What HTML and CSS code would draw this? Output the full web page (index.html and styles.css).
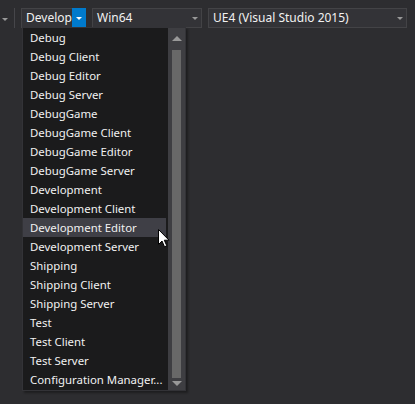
FILE: index.html
```html
<!DOCTYPE html>
<html lang="en">
<head>
    <meta charset="UTF-8">
    <title>Solution Configurations</title>
    <link rel="stylesheet" href="styles.css">
</head>
<body>
    <div class="toolbar">
        <div class="overflow"><span class="arrow gray"></span></div>
        <div class="separator"></div>
        <div class="combo config">
            <div class="combo-text">Development</div>
            <div class="combo-btn active"><span class="arrow white"></span></div>
        </div>
        <div class="combo platform">
            <div class="combo-text">Win64</div>
            <div class="combo-btn"><span class="arrow gray"></span></div>
        </div>
        <div class="combo project">
            <div class="combo-text">UE4 (Visual Studio 2015)</div>
            <div class="combo-btn"><span class="arrow gray"></span></div>
        </div>
    </div>

    <div class="dropdown">
        <ul class="items">
            <li>Debug</li>
            <li>Debug Client</li>
            <li>Debug Editor</li>
            <li>Debug Server</li>
            <li>DebugGame</li>
            <li>DebugGame Client</li>
            <li>DebugGame Editor</li>
            <li>DebugGame Server</li>
            <li>Development</li>
            <li>Development Client</li>
            <li class="hover">Development Editor</li>
            <li>Development Server</li>
            <li>Shipping</li>
            <li>Shipping Client</li>
            <li>Shipping Server</li>
            <li>Test</li>
            <li>Test Client</li>
            <li>Test Server</li>
            <li>Configuration Manager...</li>
        </ul>
        <div class="scrollbar">
            <div class="scroll-arrow"><span class="arrow up"></span></div>
            <div class="track"><div class="thumb"></div></div>
            <div class="scroll-arrow"><span class="arrow down"></span></div>
        </div>
    </div>

    <!-- mouse pointer -->
    <svg class="cursor" width="12" height="19" viewBox="0 0 12 19">
        <path d="M0.5 0.5 L0.5 15.5 L4 12 L6.5 17.8 L8.8 16.8 L6.3 11.2 L11 11.2 Z" fill="#fff" stroke="#000" stroke-width="1"/>
    </svg>
</body>
</html>
```

FILE: styles.css
```css
body {
    margin: 0;
    background-color: #2d2d30;
    font-family: "Noto Sans", "Open Sans", sans-serif;
    font-size: 11.4px;
    color: #f1f1f1;
    height: 404px;
    overflow: hidden;
}
.toolbar {
    display: flex;
    align-items: center;
    padding-top: 8px;
    height: 20px;
}
.overflow {
    width: 8px;
    margin-left: 1px;
    display: flex;
    justify-content: center;
    padding-top: 2px;
}
.separator {
    width: 1px;
    height: 20px;
    margin-left: 5px;
    background-color: #46464a;
}
.arrow {
    display: block;
    width: 0;
    height: 0;
    border-left: 3px solid transparent;
    border-right: 3px solid transparent;
    border-top: 3px solid #999999;
}
.arrow.white {
    border-top-color: #ffffff;
}
.combo {
    box-sizing: border-box;
    height: 20px;
    margin-left: 6px;
    display: flex;
    background-color: #333337;
    border: 1px solid #434346;
}
.config { width: 65px; }
.platform { width: 110px; }
.project { width: 199px; }
.combo-text {
    flex: 1;
    min-width: 0;
    overflow: hidden;
    white-space: nowrap;
    padding-left: 4px;
    line-height: 17px;
    font-size: 12px;
}
.combo-btn {
    width: 13px;
    flex-shrink: 0;
    display: flex;
    align-items: center;
    justify-content: center;
    padding-top: 1px;
}
.combo-btn.active {
    background-color: #007acc;
    margin: -1px -1px -1px 0;
    width: 14px;
}
.dropdown {
    position: absolute;
    left: 22px;
    top: 27px;
    width: 164px;
    height: 364px;
    box-sizing: border-box;
    display: flex;
    background-color: #1b1b1c;
    border: 1px solid #333337;
    box-shadow: 2px 2px 2px rgba(0, 0, 0, 0.35);
}
.items {
    list-style: none;
    margin: 0;
    padding: 0;
    width: 144px;
}
.items li {
    height: 19px;
    line-height: 19px;
    padding-left: 7px;
    white-space: nowrap;
}
.items li.hover {
    background-color: #3f3f46;
}
.scrollbar {
    margin-left: 2px;
    width: 17px;
    display: flex;
    flex-direction: column;
    background-color: #3e3e42;
}
.scroll-arrow {
    height: 17px;
    display: flex;
    align-items: center;
    justify-content: center;
}
.arrow.up {
    border-left-width: 5px;
    border-right-width: 5px;
    border-top: none;
    border-bottom: 5px solid #999999;
    margin-top: 4px;
}
.arrow.down {
    border-left-width: 5px;
    border-right-width: 5px;
    border-top: 5px solid #999999;
    margin-top: 4px;
}
.track {
    flex: 1;
    display: flex;
    justify-content: center;
}
.thumb {
    width: 9px;
    height: 100%;
    background-color: #686868;
    margin-top: 5px;
    margin-bottom: 3px;
}
.cursor {
    position: absolute;
    left: 158px;
    top: 229px;
}
```
